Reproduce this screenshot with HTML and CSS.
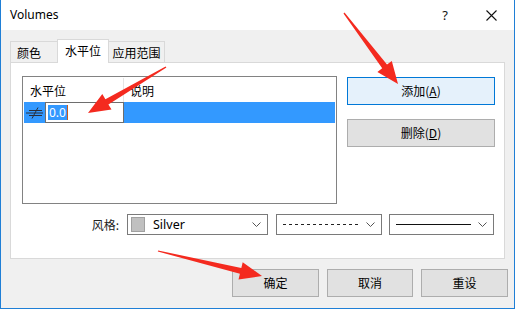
FILE: index.html
```html
<!DOCTYPE html>
<html lang="zh-CN">
<head>
<meta charset="utf-8">
<title>Volumes</title>
<link rel="stylesheet" href="styles.css">
</head>
<body>
<div class="window">
  <div class="titlebar">
    <span class="title">Volumes</span>
    <span class="cap help">?</span>
    <span class="cap close">
      <svg width="11" height="11" viewBox="0 0 11 11"><path d="M0.5 0.5 L10.5 10.5 M10.5 0.5 L0.5 10.5" stroke="#111" stroke-width="1.1" fill="none"/></svg>
    </span>
  </div>
  <div class="body">
    <div class="tabs">
      <div class="tab tab1">颜色</div>
      <div class="tab active">水平位</div>
      <div class="tab tab3">应用范围</div>
    </div>
    <div class="panel">
      <div class="top-row">
        <div class="list">
          <div class="list-head">
            <div class="col1">水平位</div>
            <div class="col2">说明</div>
          </div>
          <div class="list-row sel">
            <svg class="row-icon" width="17" height="12" viewBox="0 0 17 12">
              <path d="M3 3.5 H16 M3 8.5 H16 M0 6 H17 M12 0.5 L6 11.5" stroke="#2a2f3a" stroke-width="1" fill="none"/>
            </svg>
            <span class="edit"><span class="seltext">0.0</span></span>
          </div>
        </div>
        <div class="side-buttons">
          <div class="btn primary">添加(<u>A</u>)</div>
          <div class="btn">删除(<u>D</u>)</div>
        </div>
      </div>
      <div class="style-row">
        <div class="style-label">风格:</div>
        <div class="combo combo-color">
          <span class="swatch"></span><span class="combo-text">Silver</span>
          <svg class="chev" width="9" height="5" viewBox="0 0 9 5"><path d="M0.5 0.5 L4.5 4.5 L8.5 0.5" stroke="#555" fill="none"/></svg>
        </div>
        <div class="combo combo-line">
          <span class="line dashed"></span>
          <svg class="chev" width="9" height="5" viewBox="0 0 9 5"><path d="M0.5 0.5 L4.5 4.5 L8.5 0.5" stroke="#555" fill="none"/></svg>
        </div>
        <div class="combo combo-line">
          <span class="line solid"></span>
          <svg class="chev" width="9" height="5" viewBox="0 0 9 5"><path d="M0.5 0.5 L4.5 4.5 L8.5 0.5" stroke="#555" fill="none"/></svg>
        </div>
      </div>
    </div>
    <div class="footer">
      <div class="btn fbtn">确定</div>
      <div class="btn fbtn mid">取消</div>
      <div class="btn fbtn">重设</div>
    </div>
  </div>
</div>
<svg class="arrows" width="515" height="309" viewBox="0 0 515 309">
  <polygon fill="#f42a1f" points="343.5,13.4 344.5,12.6 387,64.6 391.8,60.9 398,84 377.4,71.9 382.2,68.2"/>
  <polygon fill="#f42a1f" points="166.4,67.6 165.6,66.4 105.4,99.2 102.3,94.1 88,113 111.5,109.5 108.4,104.4"/>
  <polygon fill="#f42a1f" points="158.2,250.5 157.8,251.5 239.9,273.8 238.5,279.6 262,276 242.7,262.2 241.3,268"/>
</svg>
</body>
</html>
```
FILE: styles.css
```css
* { box-sizing: border-box; margin: 0; padding: 0; }

body {
  position: relative;
  width: 515px;
  height: 309px;
  overflow: hidden;
  font-family: "Noto Sans CJK SC", "Noto Sans", sans-serif;
  font-size: 12px;
  color: #000;
  background: #fff;
}

.window {
  width: 515px;
  height: 309px;
  border: 1px solid #1f7fd6;
  border-top: none;
  background: #f0f0f0;
  display: flex;
  flex-direction: column;
}

.titlebar {
  height: 30px;
  flex: none;
  background: #fff;
  display: flex;
  align-items: center;
  padding-left: 9px;
}

.title {
  flex: 1;
  font-family: "Noto Sans", sans-serif;
  font-size: 12px;
  line-height: 30px;
}

.cap {
  width: 46px;
  height: 30px;
  display: flex;
  align-items: center;
  justify-content: center;
}

.help {
  font-family: "Noto Sans", sans-serif;
  font-size: 13px;
  color: #111;
}

.body {
  flex: 1;
  padding: 9px 9px 0 9px;
  display: flex;
  flex-direction: column;
}

.tabs {
  height: 24px;
  flex: none;
  display: flex;
  align-items: flex-start;
  margin-bottom: -1px;
  position: relative;
  z-index: 1;
}

.tab {
  margin-top: 2px;
  height: 21px;
  border: 1px solid #d9d9d9;
  border-bottom: none;
  background: #f0f0f0;
  display: flex;
  align-items: center;
  justify-content: center;
  line-height: 1;
  padding-top: 1px;
}

.tab1 { width: 47px; justify-content: flex-start; padding-left: 6px; border-right: none; }
.tab3 { width: 56px; border-left: none; }

.tab.active {
  margin-top: 0;
  height: 24px;
  width: 52px;
  background: #fff;
  padding-top: 0;
  padding-bottom: 2px;
}

.panel {
  height: 197px;
  flex: none;
  background: #fff;
  border: 1px solid #d9d9d9;
  padding: 13px 0 0 11px;
  display: flex;
  flex-direction: column;
}

.top-row {
  display: flex;
  gap: 10px;
}

.list {
  width: 315px;
  height: 128px;
  border: 1px solid #828282;
  padding: 1px;
}

.list-head {
  height: 24px;
  display: flex;
}

.col1 {
  width: 100px;
  border-right: 1px solid #e5e5e5;
  padding-left: 6px;
  display: flex;
  align-items: center;
}

.col2 {
  padding-left: 6px;
  display: flex;
  align-items: center;
}

.list-row {
  height: 21px;
  display: flex;
  align-items: center;
}

.sel { background: #3399ff; }

.row-icon {
  margin-left: 2px;
  margin-right: 2px;
  flex: none;
}

.edit {
  width: 79px;
  height: 21px;
  background: #fff;
  border: 1px solid #6e6e6e;
  display: flex;
  align-items: center;
  padding-left: 2px;
}

.seltext {
  background: #3399ff;
  color: #fff;
  font-family: "Noto Sans", sans-serif;
  font-size: 12px;
  line-height: 15px;
  height: 15px;
  padding: 0 1px;
  border-right: 1px solid #c85a1e;
}

.side-buttons {
  margin-top: 1px;
  display: flex;
  flex-direction: column;
  gap: 14px;
}

.btn {
  width: 148px;
  height: 28px;
  background: #e1e1e1;
  border: 1px solid #adadad;
  display: flex;
  align-items: center;
  justify-content: center;
  line-height: 1;
}

.btn u { text-decoration: underline; }

.btn.primary {
  background: #e5f1fb;
  border-color: #0078d7;
}

.style-row {
  margin-top: 10px;
  display: flex;
  align-items: center;
}

.style-label {
  width: 105px;
  text-align: right;
  padding-right: 8px;
  color: #222;
}

.combo {
  height: 21px;
  background: #fff;
  border: 1px solid #7a7a7a;
  display: flex;
  align-items: center;
}

.combo-color { width: 141px; padding-left: 3px; margin-right: 8px; }
.combo-line { width: 106px; padding-left: 6px; margin-right: 7px; }
.combo-line:last-child { width: 105px; margin-right: 0; }

.swatch {
  width: 14px;
  height: 15px;
  background: #c0c0c0;
  border: 1px solid #a0a0a0;
  margin-right: 8px;
}

.combo-text {
  font-family: "Noto Sans", sans-serif;
  font-size: 12.5px;
  flex: 1;
}

.chev { margin-right: 6px; margin-left: auto; }

.line {
  width: 75px;
  height: 1px;
}

.dashed { background: repeating-linear-gradient(90deg, #222 0 3px, transparent 3px 6px); }
.solid { background: #111; }

.footer {
  padding-top: 10px;
  margin-right: -3px;
  display: flex;
  justify-content: flex-end;
  gap: 8px;
}

.fbtn { width: 87px; }
.fbtn.mid { width: 86px; }

.arrows {
  position: absolute;
  left: 0;
  top: 0;
  pointer-events: none;
}
```
